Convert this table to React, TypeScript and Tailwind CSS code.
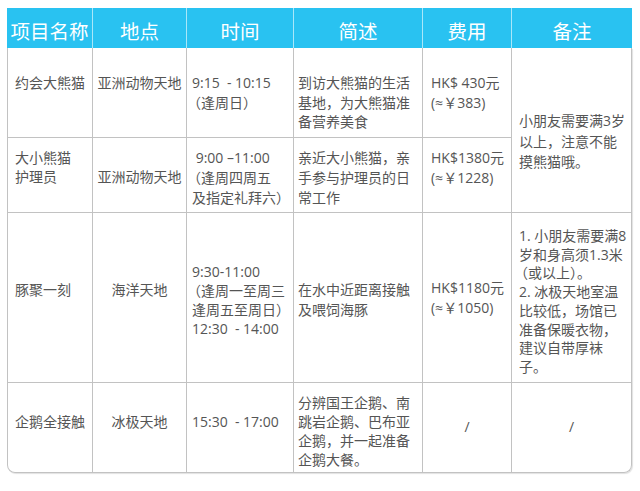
const headers = ["项目名称", "地点", "时间", "简述", "费用", "备注"];

type Cell = { lines: string[]; cls: string };

// body cells in reading order; the notes cell of the first two rows spans both
const cells: Cell[] = [
  { lines: ["约会大熊猫"], cls: "pl-[7px] pt-[25px] leading-[20px]" },
  { lines: ["亚洲动物天地"], cls: "border-l items-center pt-[25px] leading-[20px]" },
  { lines: ["9:15  - 10:15", "（逢周日）"], cls: "border-l pl-[5px] pt-[25px] leading-[20px]" },
  {
    lines: ["到访大熊猫的生活", "基地，为大熊猫准", "备营养美食"],
    cls: "border-l pl-[4px] pt-[25px] leading-[19.5px]",
  },
  { lines: ["HK$ 430元", "(≈￥383)"], cls: "border-l pl-[8px] pt-[25px] leading-[20px]" },
  {
    lines: ["小朋友需要满3岁", "以上，注意不能", "摸熊猫哦。"],
    cls: "border-l row-span-2 pl-[7px] pt-[63px] leading-[20.5px]",
  },

  { lines: ["大小熊猫", "护理员"], cls: "border-t pl-[7px] pt-[10px] leading-[19px]" },
  { lines: ["亚洲动物天地"], cls: "border-t border-l items-center pt-[29px] leading-[20px]" },
  {
    lines: [" 9:00 –11:00", "（逢周四周五", "及指定礼拜六）"],
    cls: "border-t border-l pl-[5px] pt-[10px] leading-[20px]",
  },
  {
    lines: ["亲近大小熊猫，亲", "手参与护理员的日", "常工作"],
    cls: "border-t border-l pl-[4px] pt-[10px] leading-[20px]",
  },
  { lines: ["HK$1380元", "(≈￥1228)"], cls: "border-t border-l pl-[8px] pt-[10px] leading-[20px]" },

  { lines: ["豚聚一刻"], cls: "border-t pl-[7px] pt-[67px] leading-[20px]" },
  { lines: ["海洋天地"], cls: "border-t border-l items-center pt-[67px] leading-[20px]" },
  {
    lines: ["9:30-11:00", "（逢周一至周三", "逢周五至周日）", "12:30  - 14:00"],
    cls: "border-t border-l pl-[5px] pt-[49px] leading-[19px]",
  },
  { lines: ["在水中近距离接触", "及喂饲海豚"], cls: "border-t border-l pl-[4px] pt-[67px] leading-[20px]" },
  { lines: ["HK$1180元", "(≈￥1050)"], cls: "border-t border-l pl-[8px] pt-[65px] leading-[20px]" },
  {
    lines: [
      "1. 小朋友需要满8",
      "岁和身高须1.3米",
      "（或以上）。",
      "2. 冰极天地室温",
      "比较低，场馆已",
      "准备保暖衣物，",
      "建议自带厚袜",
      "子。",
    ],
    cls: "border-t border-l pl-[7px] pt-[14px] leading-[18.7px]",
  },

  { lines: ["企鹅全接触"], cls: "border-t pl-[7px] pt-[29px] leading-[20px]" },
  { lines: ["冰极天地"], cls: "border-t border-l items-center pt-[29px] leading-[20px]" },
  { lines: ["15:30  - 17:00"], cls: "border-t border-l pl-[5px] pt-[29px] leading-[20px]" },
  {
    lines: ["分辨国王企鹅、南", "跳岩企鹅、巴布亚", "企鹅，并一起准备", "企鹅大餐。"],
    cls: "border-t border-l pl-[4px] pt-[10px] leading-[19px]",
  },
  { lines: ["/"], cls: "border-t border-l items-center pt-[34px] leading-[20px]" },
  { lines: ["/"], cls: "border-t border-l items-center pt-[34px] leading-[20px]" },
];

export default function App() {
  return (
    <div className="min-h-screen bg-white pl-[7px] pt-[8px]">
      <div
        className="w-[625px] text-[14px] text-[#555]"
        style={{ fontFamily: '"Open Sans", "Noto Sans CJK SC", sans-serif' }}
      >
        <div className="grid h-[40px] grid-cols-[85px_94px_107px_129px_89px_121px] bg-[#29c2f1] text-white">
          {headers.map((h, i) => (
            <div
              key={h}
              className={`flex items-center justify-center pt-[6px] text-[19.5px] ${
                i > 0 ? "border-l border-white/60" : ""
              }`}
              style={{ fontFamily: '"Noto Sans CJK SC", sans-serif' }}
            >
              {h}
            </div>
          ))}
        </div>

        <div className="grid grid-cols-[84px_94px_107px_129px_89px_120px] grid-rows-[89px_75px_170px_90px] overflow-hidden rounded-b-[8px] border-x border-b border-[#c2c2c2] shadow-[1px_1px_1px_rgba(0,0,0,0.12)]">
          {cells.map((c, i) => (
            <div key={i} className={`flex flex-col border-[#c2c2c2] ${c.cls}`}>
              {c.lines.map((l, j) => (
                <div key={j} className={`whitespace-pre ${l.startsWith("（") ? "-ml-[5px]" : ""}`}>
                  {l}
                </div>
              ))}
            </div>
          ))}
        </div>
      </div>
    </div>
  );
}
